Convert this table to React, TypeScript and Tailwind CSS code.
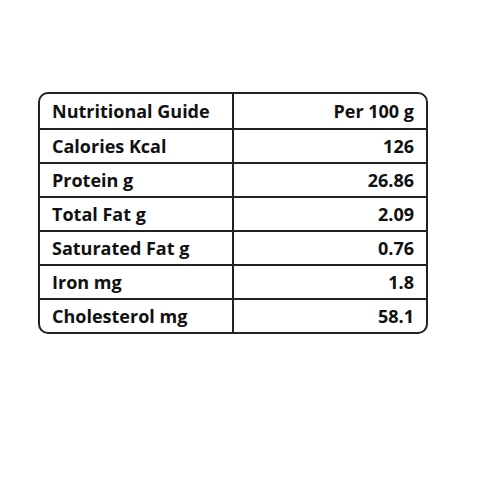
import React from "react";

const rows: [string, string][] = [
  ["Nutritional Guide", "Per 100 g"],
  ["Calories Kcal", "126"],
  ["Protein g", "26.86"],
  ["Total Fat g", "2.09"],
  ["Saturated Fat g", "0.76"],
  ["Iron mg", "1.8"],
  ["Cholesterol mg", "58.1"],
];

export default function App() {
  return (
    <div className="w-[480px] h-[480px] bg-white pt-[92px] pl-[38px]" style={{ fontFamily: "'Open Sans', 'Noto Sans', sans-serif" }}>
      <div className="w-[390px] border-2 border-[#222] rounded-[10px] overflow-hidden text-[#111]">
        {rows.map(([l, r], i) => (
          <div key={i} className={`grid grid-cols-[194px_1fr] h-[34px] ${i > 0 ? "border-t-2 border-[#222]" : ""}`}>
            <div className="flex items-center pl-[12px] border-r-2 border-[#222] text-[18px] font-bold">{l}</div>
            <div className="flex items-center justify-end pr-[12px] text-[18px] font-bold">{r}</div>
          </div>
        ))}
      </div>
    </div>
  );
}
